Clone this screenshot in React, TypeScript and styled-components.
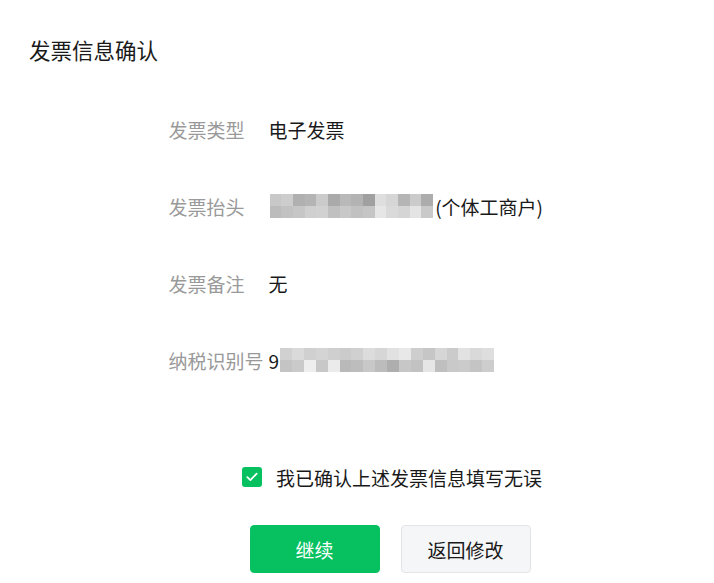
import styled, { createGlobalStyle } from "styled-components";

const GlobalStyle = createGlobalStyle`
  html, body {
    margin: 0;
    padding: 0;
    background: #ffffff;
  }
  body {
    font-family: "Noto Sans CJK SC", "Noto Sans", sans-serif;
    color: #191919;
  }
`;

// pixelated placeholders for masked text
const titleMosaic = [
  ["#c8c8c8", "#cdcdcd", "#b0b0b0", "#b4b4b4", "#cbcbcb", "#aaaaaa", "#b9b9b9", "#b3b3b3", "#a0a0a0", "#dedede", "#d6d6d6", "#b5b5b5", "#cbcbcb", "#acacac"],
  ["#bcbcbc", "#c2c2c2", "#c6c6c6", "#cfcfcf", "#d1d1d1", "#c0c0c0", "#c8c8c8", "#c1c1c1", "#c5c5c5", "#e6e6e6", "#dadada", "#d5d5d5", "#e4e4e4", "#c9c9c9"],
];

const taxMosaic = [
  ["#d1d1d1", "#dadada", "#d0d0d0", "#d4d4d4", "#cfcfcf", "#cbcbcb", "#d0d0d0", "#dcdcdc", "#d6d6d6", "#e1e1e1", "#e8e8e8", "#cecece", "#c6c6c6", "#d6d6d6", "#cbcbcb", "#e2e2e2", "#d9d9d9", "#dedede"],
  ["#c4c4c4", "#cacaca", "#eeeeee", "#c8c8c8", "#ebebeb", "#b9b9b9", "#bdbdbd", "#c8c8c8", "#bcbcbc", "#aeaeae", "#c7c7c7", "#c2c2c2", "#e6e6e6", "#bfbfbf", "#c9c9c9", "#cbcbcb", "#c4c4c4", "#cdcdcd"],
];

const Mosaic = ({ cells, $cell }: { cells: string[][]; $cell: number }) => (
  <MosaicGrid $cols={cells[0].length} $cell={$cell}>
    {cells.flat().map((c, i) => (
      <MosaicCell key={i} style={{ background: c }} />
    ))}
  </MosaicGrid>
);

const rows = [
  { label: "发票类型", value: <>电子发票</> },
  {
    label: "发票抬头",
    value: (
      <>
        <Mosaic cells={titleMosaic} $cell={11.7} />
        (个体工商户)
      </>
    ),
  },
  { label: "发票备注", value: <>无</> },
  {
    label: "纳税识别号",
    value: (
      <>
        9
        <Mosaic cells={taxMosaic} $cell={11.9} />
      </>
    ),
  },
];

export default function App() {
  return (
    <>
      <GlobalStyle />
      <Page>
        <Title>发票信息确认</Title>
        <InfoList>
          {rows.map((r) => (
            <InfoRow key={r.label}>
              <Label>{r.label}</Label>
              <Value>{r.value}</Value>
            </InfoRow>
          ))}
        </InfoList>
        <Actions>
          <Agreement>
            <CheckBox>
              <svg width="12" height="10" viewBox="0 0 12 10" fill="none">
                <path d="M1.3 5.2 4.4 8.1 10.7 1.6" stroke="#fff" strokeWidth="1.8" strokeLinecap="round" strokeLinejoin="round" />
              </svg>
            </CheckBox>
            我已确认上述发票信息填写无误
          </Agreement>
          <Buttons>
            <Button $primary>继续</Button>
            <Button>返回修改</Button>
          </Buttons>
        </Actions>
      </Page>
    </>
  );
}

const Page = styled.div`
  width: 714px;
  min-height: 583px;
  padding: 35px 0 0;
  box-sizing: border-box;
`;

const Title = styled.h1`
  margin: 0 0 0 29px;
  font-size: 21.5px;
  line-height: 30px;
  font-weight: 400;
  color: #1a1a1a;
`;

const InfoList = styled.div`
  width: 378px;
  margin: 50px auto 0;
  display: flex;
  flex-direction: column;
  gap: 49px;
  padding-left: 1px;
`;

const InfoRow = styled.div`
  display: flex;
  align-items: center;
  height: 28px;
  font-size: 19px;
`;

const Label = styled.div`
  width: 100px;
  flex-shrink: 0;
  color: #999999;
  white-space: nowrap;
`;

const Value = styled.div`
  display: flex;
  align-items: center;
  color: #191919;
  white-space: nowrap;
`;

const MosaicGrid = styled.div<{ $cols: number; $cell: number }>`
  display: grid;
  grid-template-columns: repeat(${(p) => p.$cols}, ${(p) => p.$cell}px);
  grid-auto-rows: 12px;
  margin: 0 2px 0 1px;
`;

const MosaicCell = styled.div``;

const Actions = styled.div`
  display: flex;
  flex-direction: column;
  align-items: center;
  padding-left: 66px;
  margin-top: 89px;
`;

const Agreement = styled.label`
  display: flex;
  align-items: center;
  gap: 14px;
  height: 28px;
  padding-left: 4px;
  font-size: 19px;
  color: #191919;
`;

const CheckBox = styled.span`
  width: 20px;
  height: 20px;
  border-radius: 3px;
  background: #07c160;
  display: flex;
  align-items: center;
  justify-content: center;
`;

const Buttons = styled.div`
  display: flex;
  gap: 21px;
  margin-top: 34px;
`;

const Button = styled.button<{ $primary?: boolean }>`
  width: 130px;
  height: 48px;
  border-radius: 4px;
  font-family: inherit;
  font-size: 19px;
  cursor: pointer;
  border: 1px solid ${(p) => (p.$primary ? "#07c160" : "#e3e4e6")};
  background: ${(p) => (p.$primary ? "#07c160" : "#f5f6f7")};
  color: ${(p) => (p.$primary ? "#ffffff" : "#191919")};
`;
